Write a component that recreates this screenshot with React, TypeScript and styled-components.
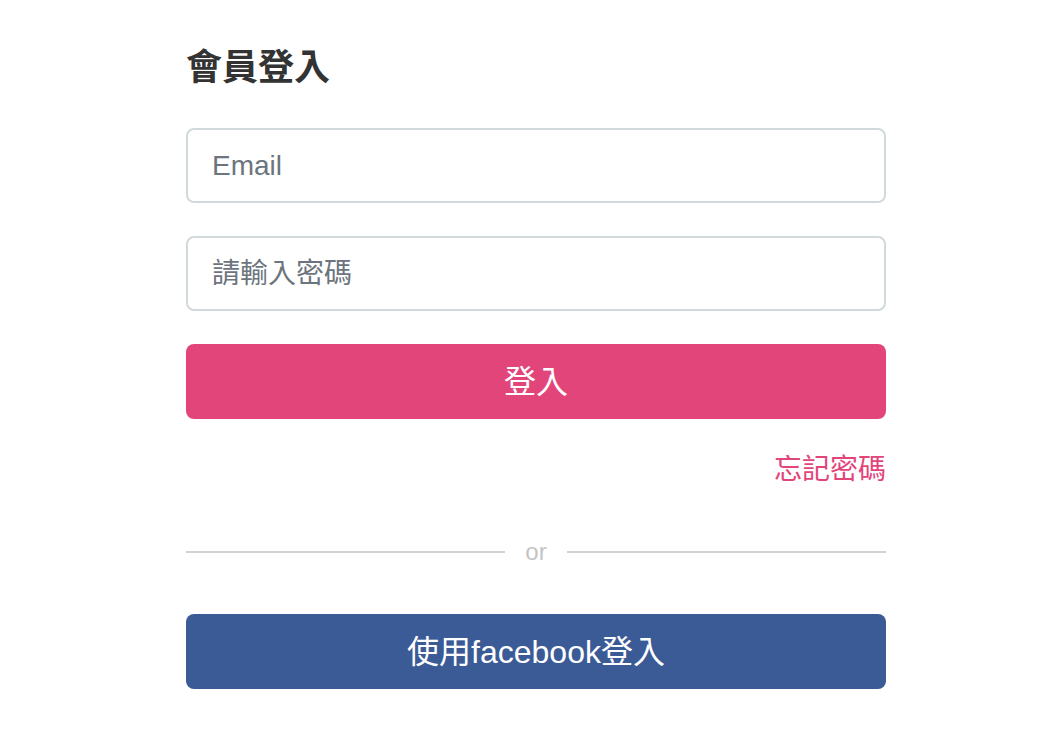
import React from "react";
import styled, { createGlobalStyle } from "styled-components";

const GlobalStyle = createGlobalStyle`
  html, body { margin: 0; padding: 0; background: #ffffff; }
  body { font-family: "Liberation Sans", "Noto Sans CJK TC", sans-serif; }
  * { box-sizing: border-box; }
`;

const Page = styled.div`
  padding: 43px 0 0 186px;
`;

const Form = styled.form`
  width: 700px;
  display: flex;
  flex-direction: column;
`;

const Title = styled.h1`
  margin: 0 0 35px;
  font-size: 36px;
  line-height: 50px;
  font-weight: 700;
  color: #333333;
`;

const Input = styled.input`
  width: 100%;
  height: 75px;
  padding: 0 24px;
  border: 2px solid #d2d9dc;
  border-radius: 8px;
  font-family: inherit;
  font-size: 28px;
  color: #333;
  outline: none;
  margin-bottom: 33px;
  &::placeholder { color: #6c757d; }
`;

const Button = styled.button<{ $bg: string }>`
  width: 100%;
  height: 75px;
  padding: 0 0 5px;
  border: none;
  border-radius: 8px;
  background: ${(p) => p.$bg};
  color: #ffffff;
  font-family: inherit;
  font-size: 32px;
  cursor: pointer;
`;

const ForgotRow = styled.div`
  display: flex;
  justify-content: flex-end;
  margin-top: 31px;
`;

const Forgot = styled.a`
  font-size: 28px;
  line-height: 40px;
  color: #e2457a;
  text-decoration: none;
`;

const Divider = styled.div`
  display: flex;
  align-items: center;
  gap: 20px;
  margin: 47px 0;
  &::before, &::after {
    content: "";
    flex: 1;
    height: 2px;
    background: #ced3d7;
  }
`;

const Or = styled.span`
  font-size: 24px;
  line-height: 30px;
  color: #c4c4c4;
`;

export default function App() {
  return (
    <>
      <GlobalStyle />
      <Page>
        <Form onSubmit={(e) => e.preventDefault()}>
          <Title>會員登入</Title>
          <Input type="email" placeholder="Email" />
          <Input type="password" placeholder="請輸入密碼" />
          <Button type="submit" $bg="#e2457a">登入</Button>
          <ForgotRow>
            <Forgot href="#">忘記密碼</Forgot>
          </ForgotRow>
          <Divider>
            <Or>or</Or>
          </Divider>
          <Button type="button" $bg="#3b5b96">使用facebook登入</Button>
        </Form>
      </Page>
    </>
  );
}
